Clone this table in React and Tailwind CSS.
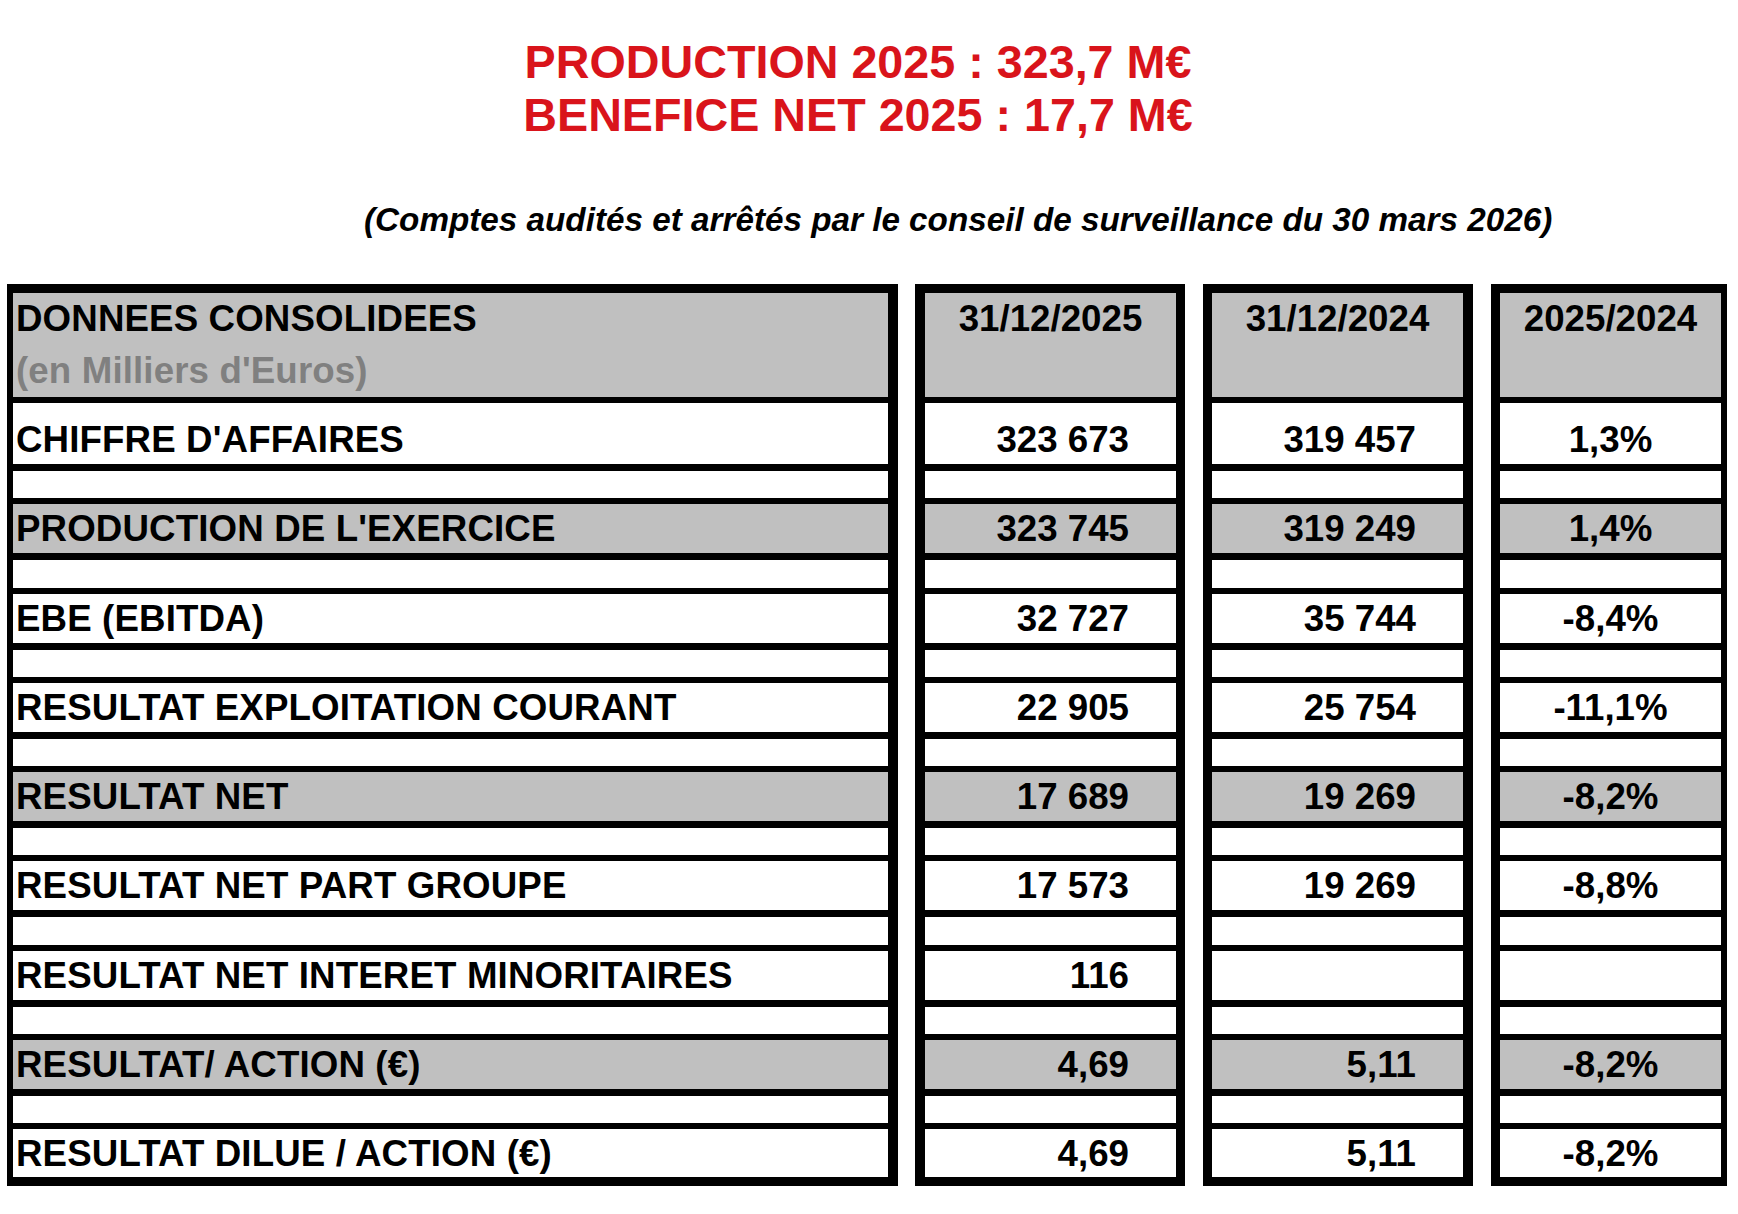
import React from "react";

const rows = [
  { label: "CHIFFRE D'AFFAIRES", a: "323 673", b: "319 457", c: "1,3%", gray: false, first: true },
  { label: "PRODUCTION DE L'EXERCICE", a: "323 745", b: "319 249", c: "1,4%", gray: true },
  { label: "EBE (EBITDA)", a: "32 727", b: "35 744", c: "-8,4%", gray: false },
  { label: "RESULTAT EXPLOITATION COURANT", a: "22 905", b: "25 754", c: "-11,1%", gray: false },
  { label: "RESULTAT NET", a: "17 689", b: "19 269", c: "-8,2%", gray: true },
  { label: "RESULTAT NET PART GROUPE", a: "17 573", b: "19 269", c: "-8,8%", gray: false },
  { label: "RESULTAT NET INTERET MINORITAIRES", a: "116", b: "", c: "", gray: false },
  { label: "RESULTAT/ ACTION (€)", a: "4,69", b: "5,11", c: "-8,2%", gray: true },
  { label: "RESULTAT DILUE / ACTION (€)", a: "4,69", b: "5,11", c: "-8,2%", gray: false, last: true },
];

function Column({ className, header, field, align }) {
  const alignCls =
    align === "left"
      ? "justify-start pl-[3px] tracking-[0.12px]"
      : align === "right"
      ? "justify-end pr-[47px]"
      : "justify-center";
  return (
    <div className={"flex flex-col border-y-[9px] border-black " + className}>
      <div className="h-[110px] border-b-[6px] border-black bg-[#c0c0c0] leading-[52px]">{header}</div>
      {rows.map((r, i) => {
        const h = r.first
          ? "h-[68px] border-b-[7px] items-end"
          : r.last
          ? "h-[48px] items-center"
          : "h-[56px] border-b-[7px] items-center";
        return (
          <React.Fragment key={i}>
            <div
              className={
                "flex border-black leading-[49px] whitespace-nowrap " +
                h +
                " " +
                alignCls +
                " " +
                (r.gray ? "bg-[#c0c0c0]" : "bg-white")
              }
            >
              <span>{r[field]}</span>
            </div>
            {!r.last && <div className="h-[33.25px] border-b-[6px] border-black bg-white" />}
          </React.Fragment>
        );
      })}
    </div>
  );
}

export default function App() {
  return (
    <div className="w-[1738px] h-[1214px] bg-white text-black font-bold font-['Liberation_Sans',Arial,sans-serif]">
      <div className="pt-[36px] pr-[22px] text-center text-[46.7px] leading-[53px] text-[#d9141b]">
        <p>PRODUCTION 2025 : 323,7 M€</p>
        <p>BENEFICE NET 2025 : 17,7 M€</p>
      </div>
      <p className="mt-[59px] pl-[364px] italic text-[33.25px] leading-[38px] whitespace-nowrap">
        (Comptes audités et arrêtés par le conseil de surveillance du 30 mars 2026)
      </p>
      <div className="mt-[45px] flex text-[36.7px]">
        <Column
          className="ml-[7px] w-[891px] border-l-[6px] border-r-[10px]"
          field="label"
          align="left"
          header={
            <div className="pl-[3px] tracking-[0.12px]">
              <div>DONNEES CONSOLIDEES</div>
              <div className="text-[#808080]">(en Milliers d'Euros)</div>
            </div>
          }
        />
        <Column
          className="ml-[17px] w-[270px] border-l-[10px] border-r-[9px]"
          field="a"
          align="right"
          header={<div className="text-center">31/12/2025</div>}
        />
        <Column
          className="ml-[18px] w-[270px] border-l-[9px] border-r-[10px]"
          field="b"
          align="right"
          header={<div className="text-center">31/12/2024</div>}
        />
        <Column
          className="ml-[18px] w-[236px] border-l-[9px] border-r-[6px]"
          field="c"
          align="center"
          header={<div className="text-center">2025/2024</div>}
        />
      </div>
    </div>
  );
}
